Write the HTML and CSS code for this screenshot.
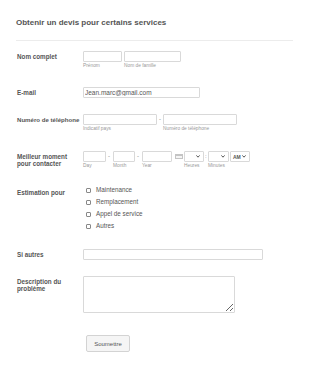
FILE: index.html
```html
<!DOCTYPE html>
<html lang="fr">
<head>
	<meta charset="UTF-8">
	<title>Obtenir un devis</title>
	<link rel="stylesheet" href="styles.css">
</head>
<body>
	<div class="form">
		<div class="header">
			<h1>Obtenir un devis pour certains services</h1>
		</div>

		<div class="field f-name">
			<div class="label">Nom complet</div>
			<div class="inputs">
				<div class="sub">
					<input type="text" class="w-first">
					<span>Prénom</span>
				</div>
				<div class="sub">
					<input type="text" class="w-last">
					<span>Nom de famille</span>
				</div>
			</div>
		</div>

		<div class="field f-email">
			<div class="label">E-mail</div>
			<div class="inputs">
				<input type="text" class="w-email" value="Jean.marc@gmail.com">
			</div>
		</div>

		<div class="field f-phone">
			<div class="label">Numéro de téléphone</div>
			<div class="inputs">
				<div class="sub">
					<input type="text" class="w-phone">
					<span>Indicatif pays</span>
				</div>
				<div class="sep">-</div>
				<div class="sub">
					<input type="text" class="w-phone">
					<span>Numéro de téléphone</span>
				</div>
			</div>
		</div>

		<div class="field f-time">
			<div class="label">Meilleur moment<br>pour contacter</div>
			<div class="inputs">
				<div class="sub">
					<input type="text" class="w-day">
					<span>Day</span>
				</div>
				<div class="sep">-</div>
				<div class="sub">
					<input type="text" class="w-month">
					<span>Month</span>
				</div>
				<div class="sep">-</div>
				<div class="sub">
					<input type="text" class="w-year">
					<span>Year</span>
				</div>
				<div class="cal">
					<svg width="8" height="5" viewBox="0 0 8 5"><rect x="0.5" y="0.5" width="7" height="4" fill="#f4f4f4" stroke="#c4c4c4"/><line x1="0.5" y1="1.5" x2="7.5" y2="1.5" stroke="#c4c4c4"/></svg>
				</div>
				<div class="sub">
					<div class="select w-hour"><svg width="4" height="3" viewBox="0 0 4 3"><path d="M0.4 0.4 L2 2.2 L3.6 0.4" fill="none" stroke="#444" stroke-width="0.9"/></svg></div>
					<span>Heures</span>
				</div>
				<div class="sep colon">:</div>
				<div class="sub">
					<div class="select w-min"><svg width="4" height="3" viewBox="0 0 4 3"><path d="M0.4 0.4 L2 2.2 L3.6 0.4" fill="none" stroke="#444" stroke-width="0.9"/></svg></div>
					<span>Minutes</span>
				</div>
				<div class="sub ampm">
					<div class="select w-ampm"><b>AM</b><svg width="4" height="3" viewBox="0 0 4 3"><path d="M0.4 0.4 L2 2.2 L3.6 0.4" fill="none" stroke="#444" stroke-width="0.9"/></svg></div>
				</div>
			</div>
		</div>

		<div class="field f-estim">
			<div class="label">Estimation pour</div>
			<div class="options">
				<label><i class="box"></i>Maintenance</label>
				<label><i class="box"></i>Remplacement</label>
				<label><i class="box"></i>Appel de service</label>
				<label><i class="box"></i>Autres</label>
			</div>
		</div>

		<div class="field f-other">
			<div class="label">Si autres</div>
			<div class="inputs">
				<input type="text" class="w-other">
			</div>
		</div>

		<div class="field f-desc">
			<div class="label">Description du<br>problème</div>
			<div class="inputs">
				<textarea class="w-desc"></textarea>
			</div>
		</div>

		<div class="actions">
			<button type="button">Soumettre</button>
		</div>
	</div>
</body>
</html>
```

FILE: styles.css
```css
*{padding:0;margin:0;box-sizing:border-box;}
body{
	background:#fff;
	font-family:"Liberation Sans", Arial, sans-serif;
	color:#555;
}
.form{
	width:310px;
	padding:0 17px 0 16px;
}
.header{
	padding-top:18px;
	padding-bottom:12px;
	border-bottom:1px solid #ececec;
}
.header h1{
	font-size:8px;
	line-height:10px;
	font-weight:bold;
	color:#555;
}
.field{
	display:flex;
	padding-left:1px;
}
.f-name{margin-top:10px;}
.f-email{margin-top:17px;}
.f-phone{margin-top:16px;}
.f-time{margin-top:18px;}
.f-estim{margin-top:16px;}
.f-other{margin-top:19px;}
.f-desc{margin-top:16px;}
.label{
	width:66px;
	flex:none;
	padding-top:2px;
	font-size:6.3px;
	line-height:7px;
	font-weight:bold;
	color:#555;
}
.f-phone .label{white-space:nowrap;font-size:6.1px;}
.f-estim .label{padding-top:3px;}
.inputs{
	display:flex;
	align-items:flex-start;
}
.sub{
	display:flex;
	flex-direction:column;
	margin-right:2px;
}
.sub span{
	font-size:4.8px;
	line-height:8px;
	color:#999;
}
input, textarea, .select{
	display:block;
	height:11px;
	border:1px solid #d9d9d9;
	border-radius:1px;
	background:#fff;
	font-family:"Liberation Sans", Arial, sans-serif;
	font-size:6.5px;
	color:#555;
	padding:0 1px;
	outline:none;
}
.sep{
	width:6px;
	margin-left:1px;
	font-size:6px;
	line-height:11px;
	color:#777;
}
.f-phone .sub{margin-right:0;}
.f-phone .sep{width:6px;margin:0;padding-left:2px;}
.f-time .sub{margin-right:0;}
.f-time .sep{width:7px;margin:0;padding-left:2px;}
.f-time .colon{width:4px;padding-left:1px;}
.cal{
	width:12px;
	padding:3px 0 0 3px;
	line-height:0;
}
.select{
	display:flex;
	align-items:center;
	justify-content:flex-end;
	padding:0 3px 0 2px;
}
.select b{
	font-size:5px;
	font-weight:bold;
	color:#555;
	margin-right:auto;
}
.ampm{margin-left:1px;}
.w-first{width:39px;}
.w-last{width:57px;}
.w-email{width:117px;}
.w-phone{width:74px;}
.w-day{width:23px;}
.w-month{width:22px;}
.w-year{width:30px;}
.w-hour{width:20px;}
.w-min{width:21px;}
.w-ampm{width:20px;}
.w-other{width:180px;}
.w-desc{width:152px;height:37px;resize:both;}
.options{
	display:flex;
	flex-direction:column;
	gap:4px;
	padding-left:3px;
}
.options label{
	display:flex;
	align-items:center;
	font-size:6.3px;
	line-height:8px;
	color:#555;
}
.box{
	width:5px;
	height:5px;
	border:0.7px solid #888;
	border-radius:1px;
	margin-right:5px;
}
.actions{
	margin-top:22px;
	padding-left:70px;
}
.actions button{
	display:block;
	width:44px;
	height:17px;
	border:1px solid #d3d3d3;
	border-radius:2px;
	background:#f5f5f5;
	font-family:"Liberation Sans", Arial, sans-serif;
	font-size:6px;
	color:#555;
}
```
